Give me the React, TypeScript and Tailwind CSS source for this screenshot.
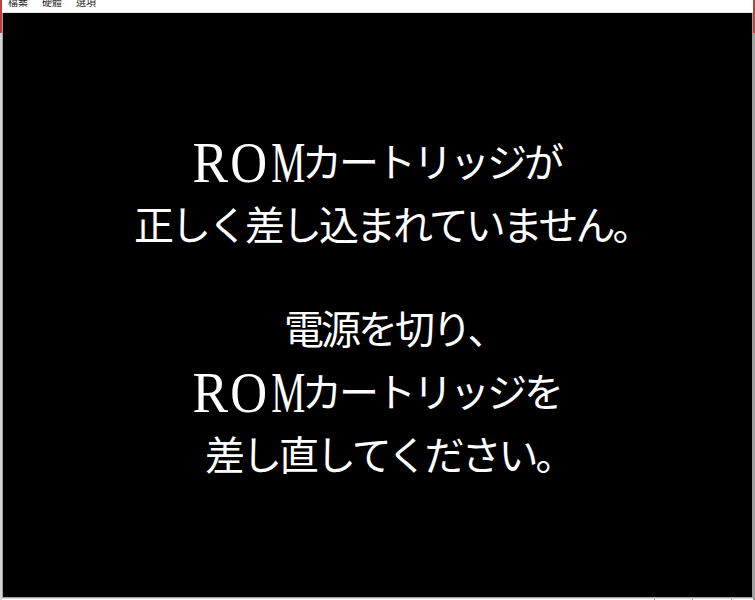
import type { ReactNode } from 'react'

// letters of "ROM" drawn as full-width cells, like the console font
function Rom() {
  return (
    <span className="font-['Liberation_Serif',serif] tracking-normal">
      <span className="inline-block w-[37px] scale-x-[0.92] text-center align-[-5px] text-[58px] leading-[42px]">R</span>
      <span className="inline-block w-[37px] scale-x-[0.88] text-center align-[-5px] text-[58px] leading-[42px]">O</span>
      <span className="inline-block w-[37px] scale-x-[0.66] text-center align-[-5px] text-[58px] leading-[42px]">M</span>
    </span>
  )
}

function Line({ className, children }: { className: string; children: ReactNode }) {
  return <div className={`h-[63px] whitespace-nowrap leading-[63px] ${className}`}>{children}</div>
}

export default function App() {
  return (
    <div className="flex h-[600px] w-[755px] overflow-hidden bg-white">
      {/* left window frame */}
      <div className="flex w-[2px] flex-col">
        <div className="h-[33px] bg-[#b8413d]" />
        <div className="flex-1 bg-[#d4d4d4]" />
      </div>

      <div className="flex flex-1 flex-col">
        {/* menu bar */}
        <div className="flex h-[13px] gap-[14px] overflow-hidden border-b border-[#e3e3e3] bg-white pl-[6px] font-['Noto_Sans_CJK_TC',sans-serif] text-[10px] leading-none text-[#1e1e1e]">
          <span className="-mt-[3px]">檔案</span>
          <span className="-mt-[3px]">硬體</span>
          <span className="-mt-[3px]">選項</span>
        </div>

        {/* game screen */}
        <div className="flex h-[585px] flex-col border-x border-b border-[#a0a0a0] bg-black pt-[116px] font-['Noto_Sans_CJK_JP',sans-serif] text-[40px] tracking-[-3px] text-white">
          <Line className="ml-[188px]">
            <Rom />カートリッジが
          </Line>
          <Line className="ml-[131px]">正しく差し込まれていません。</Line>
          <Line className="mt-[41px] ml-[281px]">電源を切り、</Line>
          <Line className="ml-[188px]">
            <Rom />カートリッジを
          </Line>
          <Line className="ml-[202px]">差し直してください。</Line>
        </div>

        {/* status bar */}
        <div className="flex h-[2px] border-t border-[#dcdcdc] bg-white">
          <div className="flex-1" />
          <div className="w-[38px] border-l border-[#a0a0a0]" />
          <div className="w-[39px] border-l border-[#a0a0a0]" />
          <div className="w-[22px] border-l border-[#a0a0a0]" />
        </div>
      </div>

      {/* right window frame */}
      <div className="flex w-[2px] flex-col">
        <div className="h-[33px] bg-[#b8413d]" />
        <div className="flex-1 bg-[#a0a0a0]" />
      </div>
    </div>
  )
}
